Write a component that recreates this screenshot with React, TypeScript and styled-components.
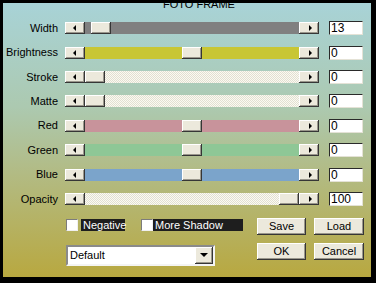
import React from "react";
import styled, { createGlobalStyle, css } from "styled-components";

type Fill = "gray" | "yellow" | "dither" | "red" | "green" | "blue";

interface SliderRow {
  label: string;
  value: string;
  pos: number;
  fill: Fill;
}

const rows: SliderRow[] = [
  { label: "Width", value: "13", pos: 0.031, fill: "gray" },
  { label: "Brightness", value: "0", pos: 0.5, fill: "yellow" },
  { label: "Stroke", value: "0", pos: 0, fill: "dither" },
  { label: "Matte", value: "0", pos: 0, fill: "dither" },
  { label: "Red", value: "0", pos: 0.5, fill: "red" },
  { label: "Green", value: "0", pos: 0.5, fill: "green" },
  { label: "Blue", value: "0", pos: 0.5, fill: "blue" },
  { label: "Opacity", value: "100", pos: 1, fill: "dither" },
];

const fills: Record<Fill, string> = {
  gray: "#808080",
  yellow: "#c8c634",
  dither: "repeating-conic-gradient(#fbfaf2 0 25%, #e2e0d2 0 50%) 0 0 / 2px 2px",
  red: "#c8939b",
  green: "#8ec796",
  blue: "#7ba4cb",
};

const GlobalStyle = createGlobalStyle`
  html, body {
    margin: 0;
    padding: 0;
    background: #000;
  }
  body {
    font-family: "Liberation Sans", Arial, sans-serif;
    font-size: 11px;
  }
`;

const raised = css`
  background: #ece9dc;
  box-shadow: inset -1px -1px #363636, inset 1px 1px #ffffff,
    inset -2px -2px #9a978c;
`;

const Frame = styled.div`
  width: 376px;
  height: 283px;
  box-sizing: border-box;
  border-style: solid;
  border-color: #000;
  border-width: 3px 5px 6px 3px;
  background: linear-gradient(
    180deg,
    #a8d3d7 0%,
    #acc9b0 38%,
    #b2bb84 62%,
    #b8a840 100%
  );
  overflow: hidden;
  display: flex;
  flex-direction: column;
  color: #000;
`;

const Title = styled.div`
  margin-top: -5px;
  height: 12px;
  line-height: 12px;
  padding-left: 160px;
  font-size: 11px;
`;

const Rows = styled.div`
  display: grid;
  grid-auto-rows: 24.43px;
  margin-top: 6px;
`;

const Row = styled.div`
  display: flex;
  align-items: center;
`;

const Label = styled.span`
  width: 55px;
  margin-right: 7px;
  text-align: right;
  line-height: 13px;
  white-space: nowrap;
`;

const Slider = styled.div`
  width: 254px;
  height: 12px;
  margin-right: 10px;
  display: flex;
`;

const ArrowButton = styled.div`
  ${raised};
  width: 20px;
  height: 12px;
  flex: none;
  display: flex;
  align-items: center;
  justify-content: center;
`;

const Arrow = styled.span<{ $dir: "left" | "right" }>`
  width: 0;
  height: 0;
  border-top: 3px solid transparent;
  border-bottom: 3px solid transparent;
  ${(p) =>
    p.$dir === "left"
      ? "border-right: 3px solid #000; margin-right: 2px;"
      : "border-left: 3px solid #000; margin-left: 2px;"}
`;

const Track = styled.div<{ $fill: Fill }>`
  position: relative;
  flex: 1;
  height: 12px;
  background: ${(p) => fills[p.$fill]};
`;

const Thumb = styled.div`
  ${raised};
  position: absolute;
  top: 0;
  width: 20px;
  height: 12px;
`;

const ValueBox = styled.div`
  width: 34px;
  height: 14px;
  box-sizing: border-box;
  background: #fff;
  border-style: solid;
  border-width: 1px;
  border-color: #2a2a2a #e4e2d6 #e4e2d6 #2a2a2a;
  padding-left: 1px;
  font-size: 12px;
  line-height: 12px;
`;

const Bottom = styled.div`
  display: flex;
  margin-top: 6.5px;
  padding-left: 63px;
`;

const LeftCol = styled.div`
  width: 191px;
  display: flex;
  flex-direction: column;
  padding-top: 1px;
`;

const CheckRow = styled.div`
  display: flex;
  align-items: center;
  height: 12px;
`;

const CheckBox = styled.span`
  width: 12px;
  height: 12px;
  box-sizing: border-box;
  background: #fff;
  border-style: solid;
  border-width: 1px;
  border-color: #7c7c7c #f0f0f0 #f0f0f0 #7c7c7c;
  flex: none;
`;

const CheckLabel = styled.span<{ $width: number; $before: number; $after: number }>`
  width: ${(p) => p.$width}px;
  margin-left: ${(p) => p.$before}px;
  margin-right: ${(p) => p.$after}px;
  height: 12px;
  line-height: 12px;
  box-sizing: border-box;
  padding-left: 2px;
  background: #1e1e1e;
  color: #fff;
  white-space: nowrap;
`;

const Dropdown = styled.div`
  margin-top: 14px;
  width: 149px;
  height: 21px;
  box-sizing: border-box;
  background: #fff;
  border-style: solid;
  border-width: 2px;
  border-color: #8a8a8a #f4f4f4 #f4f4f4 #8a8a8a;
  display: flex;
  align-items: center;
  justify-content: space-between;
`;

const DropText = styled.span`
  padding-left: 2px;
  font-size: 11px;
`;

const DropButton = styled.div`
  ${raised};
  width: 18px;
  height: 17px;
  display: flex;
  align-items: center;
  justify-content: center;
`;

const DownArrow = styled.span`
  width: 0;
  height: 0;
  border-left: 4px solid transparent;
  border-right: 4px solid transparent;
  border-top: 4px solid #000;
`;

const Buttons = styled.div`
  display: grid;
  grid-template-columns: 49px 50px;
  grid-auto-rows: 17px;
  column-gap: 8px;
  row-gap: 8px;
`;

const Button = styled.div`
  ${raised};
  display: flex;
  align-items: center;
  justify-content: center;
  font-size: 11px;
`;

export default function App() {
  return (
    <>
      <GlobalStyle />
      <Frame>
        <Title>FOTO FRAME</Title>
        <Rows>
          {rows.map((r) => (
            <Row key={r.label}>
              <Label>{r.label}</Label>
              <Slider>
                <ArrowButton>
                  <Arrow $dir="left" />
                </ArrowButton>
                <Track $fill={r.fill}>
                  <Thumb style={{ left: `calc(${r.pos} * (100% - 20px))` }} />
                </Track>
                <ArrowButton>
                  <Arrow $dir="right" />
                </ArrowButton>
              </Slider>
              <ValueBox>{r.value}</ValueBox>
            </Row>
          ))}
        </Rows>
        <Bottom>
          <LeftCol>
            <CheckRow>
              <CheckBox />
              <CheckLabel $width={44} $before={3} $after={16}>
                Negative
              </CheckLabel>
              <CheckBox />
              <CheckLabel $width={90} $before={0} $after={0}>
                {" "}More Shadow
              </CheckLabel>
            </CheckRow>
            <Dropdown>
              <DropText>Default</DropText>
              <DropButton>
                <DownArrow />
              </DropButton>
            </Dropdown>
          </LeftCol>
          <Buttons>
            <Button>Save</Button>
            <Button>Load</Button>
            <Button>OK</Button>
            <Button>Cancel</Button>
          </Buttons>
        </Bottom>
      </Frame>
    </>
  );
}
